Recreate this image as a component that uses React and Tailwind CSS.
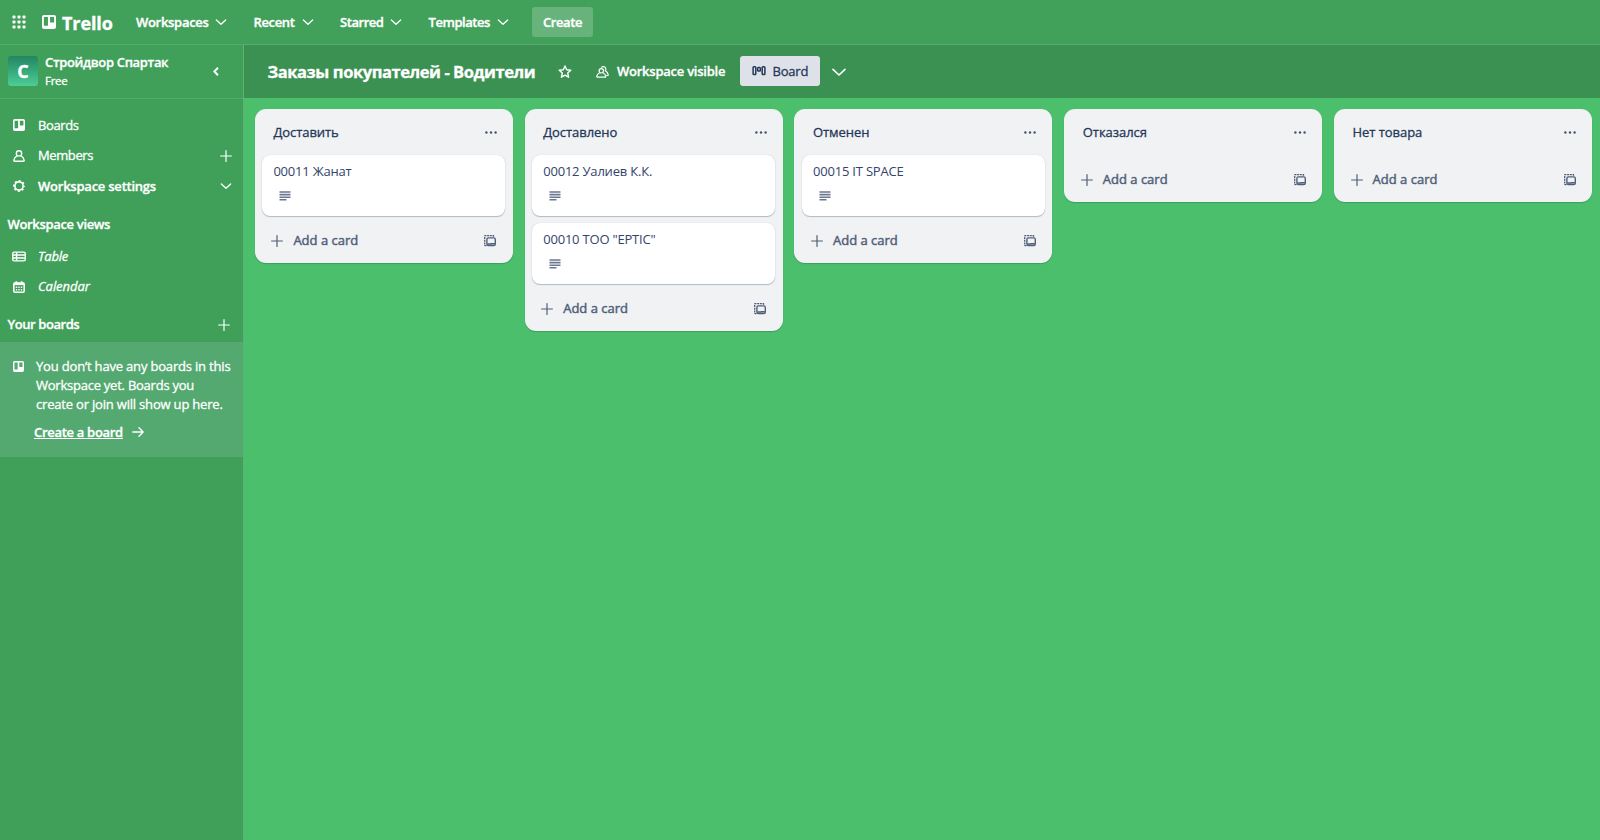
import React from "react";

const Chevron = ({ className }) => (
  <svg className={className} viewBox="0 0 24 24" fill="none" stroke="currentColor" strokeWidth="2.2" strokeLinecap="round" strokeLinejoin="round">
    <path d="M4 8.5l8 7.5 8-7.500" />
  </svg>
);

const Plus = ({ className }) => (
  <svg className={className} viewBox="0 0 12 12" fill="none" stroke="currentColor" strokeWidth="1.2" strokeLinecap="round">
    <path d="M6 .6v10.800M.6 6h10.800" />
  </svg>
);

const BoardIcon = ({ className }) => (
  <svg className={className} viewBox="0 0 12 12" fill="currentColor" fillRule="evenodd">
    <path d="M1.8 0h8.4A1.8 1.8 0 0 1 12 1.8v8.4a1.8 1.8 0 0 1-1.8 1.8H1.8A1.8 1.8 0 0 1 0 10.200V1.8A1.8 1.8 0 0 1 1.8 0zM1.600 1.700v7.600h3.500v-7.600zM6.900 1.700v4.800h3.500v-4.800z" />
  </svg>
);

const MemberIcon = ({ className }) => (
  <svg className={className} viewBox="0 0 12 12" fill="none" stroke="currentColor" strokeWidth="1.350" strokeLinejoin="round">
    <circle cx="6" cy="3.400" r="2.650" />
    <path d="M4.100 5.900C2.300 6.700 1.100 8.400.800 10.300c-.1.500.2.900.7.900h9c.5 0 .8-.4.7-.9-.3-1.900-1.500-3.600-3.300-4.400" />
  </svg>
);

const MembersIcon = ({ className }) => (
  <svg className={className} viewBox="0 0 13 12" fill="none" stroke="currentColor" strokeWidth="1.200" strokeLinejoin="round">
    <circle cx="5.300" cy="4.800" r="2.200" />
    <path d="M3.600 6.700C2 7.400 1 8.700.700 10.400c-.1.500.2.800.6.800h7.900c.5 0 .7-.4.6-.8-.3-1.700-1.300-3-2.800-3.700" />
    <path d="M5.200 1.600A2.500 2.500 0 1 1 9.300 4.700c1.700.9 2.600 2.300 2.900 4 .1.500-.2.800-.6.800h-1.300" />
  </svg>
);

const GearIcon = ({ className }) => (
  <svg className={className} viewBox="0 0 12 12" fill="none" stroke="currentColor">
    <circle cx="6" cy="6" r="4.100" strokeWidth="1.700" />
    <circle cx="6" cy="6" r="5.200" strokeWidth="1.500" strokeDasharray="2 2.084" strokeDashoffset="1" />
  </svg>
);

const TableIcon = ({ className }) => (
  <svg className={className} viewBox="0 0 15 11" fill="none" stroke="currentColor" strokeWidth="1.500">
    <rect x=".8" y=".8" width="13.400" height="9.400" rx="1.500" />
    <path d="M1 3.900h13M1 7.100h13M4.900 1v9" />
  </svg>
);

const CalendarIcon = ({ className }) => (
  <svg className={className} viewBox="0 0 12 12" fill="none" stroke="currentColor">
    <rect x=".8" y="2" width="10.400" height="9.200" rx="1.300" strokeWidth="1.600" />
    <path d="M.8 2.900h10.400" strokeWidth="2.400" />
    <path d="M3.300.3v2M8.700.3v2" strokeWidth="1.700" />
    <path d="M2.800 6.300h1.400M5.300 6.300h1.400M7.800 6.300h1.400M2.800 8.700h1.400M5.300 8.700h1.400M7.800 8.700h1.400" strokeWidth="1.500" />
  </svg>
);

const StarIcon = ({ className }) => (
  <svg className={className} viewBox="0 0 14 14" fill="none" stroke="currentColor" strokeWidth="1.400" strokeLinejoin="round">
    <path d="M7 1l1.700 3.800 4.100.4-3.100 2.800.9 4.200L7 10.100l-3.600 2.100.9-4.200L1.200 5.200l4.100-.4z" />
  </svg>
);

const ViewIcon = ({ className }) => (
  <svg className={className} viewBox="0 0 14 10" fill="none" stroke="currentColor" strokeWidth="1.500">
    <rect x="1.100" y=".8" width="2.700" height="7.800" rx=".8" />
    <rect x="5.650" y="1.500" width="2.700" height="3.600" rx=".8" />
    <rect x="10.200" y=".8" width="2.700" height="7.800" rx=".8" />
  </svg>
);

const TemplateIcon = ({ className }) => (
  <svg className={className} viewBox="0 0 12 12" fill="none" stroke="currentColor">
    <rect x="2.900" y="2.900" width="8.400" height="7.600" rx="1.500" strokeWidth="1.400" />
    <path d="M3.300 9.100h4M6.800 8.800h4" strokeWidth="1.500" />
    <path d="M2.500 10.600H1.200Q.7 10.600.7 10V1.200Q.7.7 1.200.7h8.300v1" strokeWidth="1.300" strokeDasharray="2 .7" />
  </svg>
);

const DescIcon = ({ className }) => (
  <svg className={className} viewBox="0 0 12 10" fill="none" stroke="currentColor" strokeWidth="1.600">
    <path d="M.5 1h11M.5 3.600h11M.5 6.200h11M.5 8.800h7" />
  </svg>
);

const NAV = [
  { label: "Workspaces", text: "w-[72px] tracking-[-0.3px]", item: "mr-[25.500px]" },
  { label: "Recent", text: "w-[41px] tracking-[-0.35px]", item: "mr-[25.500px]" },
  { label: "Starred", text: "w-[43px] tracking-[-0.450px]", item: "mr-[25.500px]" },
  { label: "Templates", text: "w-[61px] tracking-[-0.450px]", item: "mr-[22.500px]" },
];

const LISTS = [
  { title: "Доставить", cards: ["00011 Жанат"] },
  { title: "Доставлено", cards: ["00012 Уалиев К.К.", '00010 ТОО "EPTIC"'] },
  { title: "Отменен", cards: ["00015 IT SPACE"] },
  { title: "Отказался", cards: [] },
  { title: "Нет товара", cards: [] },
];

function TopBar() {
  return (
    <header className="flex h-[45px] shrink-0 items-center border-b border-[#56ab6c] bg-[#41a05a] pl-[12px] text-[13px] font-semibold text-white [-webkit-text-stroke:0.35px]">
      <svg className="mr-[16px] size-[14px]" viewBox="0 0 14 14" fill="currentColor">
        {[0, 5, 10].map((y) => [0, 5, 10].map((x) => <rect key={`${x}-${y}`} x={x + 0.5} y={y + 0.5} width="3" height="3" rx=".8" />))}
      </svg>
      <BoardIcon className="mr-[6px] size-[14px]" />
      <span className="mr-[23px] w-[51px] pt-[2px] text-[18px] leading-none font-bold tracking-[-0.1px] whitespace-nowrap">Trello</span>
      {NAV.map((n) => (
        <div key={n.label} className={`flex items-center ${n.item}`}>
          <span className={`pt-[1px] whitespace-nowrap ${n.text}`}>{n.label}</span>
          <Chevron className="ml-[6px] size-[14px]" />
        </div>
      ))}
      <button className="flex h-[30px] w-[61px] items-center justify-center rounded-[3px] bg-[#67b37b] pt-[1px] tracking-[-0.4px]">Create</button>
    </header>
  );
}

function Sidebar() {
  return (
    <aside className="flex w-[244px] shrink-0 flex-col border-r border-[#5ab473] bg-[#40a05a] text-[13px] text-white [-webkit-text-stroke:0.3px]">
      <div className="flex h-[54px] shrink-0 items-center border-b border-[#56ab6c] pl-[8px]">
        <div className="mb-[1px] flex size-[30px] items-center justify-center rounded-[3px] bg-linear-to-b from-[#248561] to-[#4bce97] pt-[1px] text-[18px] font-bold">С</div>
        <div className="ml-[7px] flex flex-col">
          <span className="text-[13px] leading-[19px] font-semibold tracking-[-0.33px] whitespace-nowrap">Стройдвор Спартак</span>
          <span className="text-[11.500px] leading-[18px] tracking-[-0.3px]">Free</span>
        </div>
        <svg className="mr-[24.500px] mb-[1px] ml-auto h-[9px] w-[6px]" viewBox="0 0 6 9" fill="none" stroke="currentColor" strokeWidth="2"><path d="M5 .8L1.300 4.500 5 8.200" /></svg>
      </div>
      <nav className="mt-[11px] flex flex-col">
        <div className="flex h-[30.500px] items-center pl-[13px]">
          <BoardIcon className="mr-[13px] size-[12px]" />
          <span className="tracking-[-0.4px]">Boards</span>
        </div>
        <div className="flex h-[30.500px] items-center pr-[11px] pl-[13px]">
          <MemberIcon className="mr-[13px] size-[12px]" />
          <span className="tracking-[-0.4px]">Members</span>
          <Plus className="ml-auto size-[12px]" />
        </div>
        <div className="flex h-[30.500px] items-center pr-[10px] pl-[13px]">
          <GearIcon className="mr-[13px] size-[12px]" />
          <span className="font-semibold tracking-[-0.23px]">Workspace settings</span>
          <Chevron className="ml-auto size-[14px]" />
        </div>
      </nav>
      <h2 className="mt-[12px] h-[20px] pl-[7.500px] leading-[20px] font-semibold tracking-[-0.33px]">Workspace views</h2>
      <nav className="mt-[8px] flex flex-col italic">
        <div className="flex h-[30.500px] items-center pl-[12px]">
          <TableIcon className="mr-[12px] h-[11px] w-[14px]" />
          <span className="tracking-[-0.2px]">Table</span>
        </div>
        <div className="flex h-[30px] items-center pl-[13px]">
          <CalendarIcon className="mr-[13px] size-[12px]" />
          <span className="tracking-[-0.050px]">Calendar</span>
        </div>
      </nav>
      <div className="mt-[12.500px] flex h-[20px] items-center pr-[13px] pl-[7.500px] font-semibold">
        <span className="tracking-[-0.430px]">Your boards</span>
        <Plus className="ml-auto size-[12px]" />
      </div>
      <div className="mt-[7px] flex h-[115px] bg-[#53a970] pt-[15px] pl-[12.500px]">
        <BoardIcon className="mt-[4px] mr-[12.500px] size-[11px] shrink-0" />
        <div className="flex flex-col leading-[19px] whitespace-nowrap">
          <span className="tracking-[-0.180px]">You don’t have any boards in this</span>
          <span className="tracking-[-0.240px]">Workspace yet. Boards you</span>
          <span className="tracking-[-0.190px]">create or join will show up here.</span>
          <a className="mt-[9px] -ml-[2px] flex items-center font-semibold">
            <span className="tracking-[-0.3px] underline">Create a board</span>
            <svg className="ml-[9px] h-[10px] w-[12px]" viewBox="0 0 12 10" fill="none" stroke="currentColor" strokeWidth="1.300" strokeLinecap="round" strokeLinejoin="round"><path d="M.8 5h10.400M7 .8L11.200 5 7 9.200" /></svg>
          </a>
        </div>
      </div>
    </aside>
  );
}

function List({ title, cards }) {
  return (
    <section className="flex w-[258px] shrink-0 flex-col rounded-[11px] bg-[#f1f2f4] px-[7.500px] shadow-[0_1px_1px_rgba(9,30,66,0.2)]">
      <div className="flex h-[46px] items-center pr-[8.500px] pl-[11px]">
        <h3 className="pt-[1px] text-[13px] tracking-[-0.050px] text-[#253858] [-webkit-text-stroke:0.3px]">{title}</h3>
        <svg className="ml-auto h-[3px] w-[12px] text-[#44546f]" viewBox="0 0 12 3" fill="currentColor"><circle cx="1.400" cy="1.500" r="1.200" /><circle cx="6" cy="1.500" r="1.200" /><circle cx="10.600" cy="1.500" r="1.200" /></svg>
      </div>
      {cards.length > 0 && (
        <div className="flex flex-col gap-[7.500px]">
          {cards.map((c) => (
            <article key={c} className="h-[60.500px] rounded-[8px] bg-white pt-[7px] pl-[11px] shadow-[0_1px_1px_rgba(9,30,66,0.25),0_0_1px_rgba(9,30,66,0.2)]">
              <p className="text-[13px] leading-[19px] tracking-[-0.2px] text-[#33446a]">{c}</p>
              <DescIcon className="mt-[10px] ml-[6px] h-[10px] w-[12px] text-[#6b7890]" />
            </article>
          ))}
        </div>
      )}
      <div className="flex h-[47px] items-center pt-[3px] pr-[9px] pl-[9px] text-[#505f79]">
        <Plus className="mr-[10px] size-[12px]" />
        <span className="text-[13px] [-webkit-text-stroke:0.45px]">Add a card</span>
        <TemplateIcon className="ml-auto size-[12px]" />
      </div>
    </section>
  );
}

export default function App() {
  return (
    <div className="flex h-[840px] w-[1600px] flex-col overflow-hidden bg-[#4bbf6b] font-['Open_Sans','Noto_Sans',sans-serif]">
      <TopBar />
      <div className="flex min-h-0 grow">
        <Sidebar />
        <main className="flex min-w-0 grow flex-col">
          <div className="flex h-[53px] shrink-0 items-center bg-[#3a9152] pl-[23.500px] text-white">
            <h1 className="w-[267px] pt-[1px] text-[16.500px] font-bold tracking-[-0.430px] whitespace-nowrap [-webkit-text-stroke:0.3px]">Заказы покупателей - Водители</h1>
            <StarIcon className="ml-[23px] size-[14px]" />
            <MembersIcon className="mr-[8px] ml-[24.500px] h-[12px] w-[13px]" />
            <span className="w-[108px] text-[13px] font-semibold tracking-[-0.240px] whitespace-nowrap [-webkit-text-stroke:0.3px]">Workspace visible</span>
            <button className="mb-[1px] ml-[15px] flex h-[30px] w-[80px] items-center rounded-[3px] bg-[#dfe1e8] pl-[12px] text-[13px] text-[#253858] [-webkit-text-stroke:0.3px]">
              <ViewIcon className="mr-[6.500px] h-[10px] w-[14px]" />
              <span className="pt-[1px] tracking-[-0.2px]">Board</span>
            </button>
            <Chevron className="ml-[10px] size-[18px]" />
          </div>
          <div className="flex items-start gap-[11.800px] pt-[11px] pl-[10.900px]">
            {LISTS.map((l) => <List key={l.title} {...l} />)}
          </div>
        </main>
      </div>
    </div>
  );
}
